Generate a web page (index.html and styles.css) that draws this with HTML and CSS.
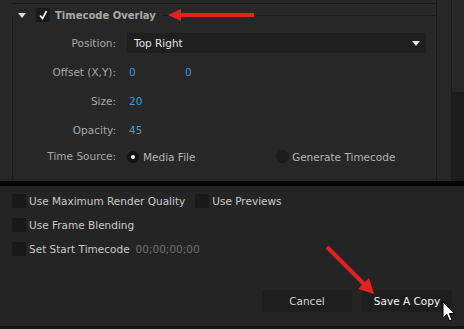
FILE: index.html
```html
<!DOCTYPE html>
<html lang="en">
<head>
    <meta charset="UTF-8">
    <title>Export Settings</title>
    <link rel="stylesheet" href="styles.css">
</head>
<body>
    <div class="effects">
        <div class="effects-main">
            <div class="prev-row"></div>

            <fieldset class="overlay">
                <legend class="overlay-head">
                    <span class="twisty"></span>
                    <span class="check">
                        <svg width="14" height="14" viewBox="0 0 14 14"><polyline points="4,7.5 6.5,10.5 10.5,3" fill="none" stroke="#f2f2f2" stroke-width="1.6"/></svg>
                    </span>
                    <span class="head-title">Timecode Overlay</span>
                </legend>

                <div class="props">
                    <div class="prop-label row-pos">Position:</div>
                    <div class="select">Top Right <span class="caret"></span></div>

                    <div class="prop-label">Offset (X,Y):</div>
                    <div class="values"><span class="num num-x">0</span><span class="num">0</span></div>

                    <div class="prop-label">Size:</div>
                    <div class="values"><span class="num">20</span></div>

                    <div class="prop-label">Opacity:</div>
                    <div class="values"><span class="num">45</span></div>

                    <div class="prop-label row-last">Time Source:</div>
                    <div class="values row-last">
                        <span class="radio-opt"><span class="radio on"></span>Media File</span>
                        <span class="radio-opt"><span class="radio big"></span>Generate Timecode</span>
                    </div>
                </div>
            </fieldset>
        </div>
        <div class="effects-gap"></div>
        <div class="scroll">
            <div class="scroll-thumb"></div>
        </div>
    </div>

    <div class="band"></div>

    <div class="footer">
        <div class="opt-row">
            <span class="box"></span><span class="opt-text">Use Maximum Render Quality</span>
            <span class="box box-2"></span><span class="opt-text">Use Previews</span>
        </div>
        <div class="opt-row">
            <span class="box"></span><span class="opt-text">Use Frame Blending</span>
        </div>
        <div class="opt-row">
            <span class="box"></span><span class="opt-text">Set Start Timecode</span>
            <span class="tc">00;00;00;00</span>
        </div>

        <div class="actions">
            <button class="btn">Cancel</button>
            <button class="btn btn-save">Save A Copy</button>
        </div>
    </div>

    <!-- annotations over the screenshot -->
    <svg class="arrow arrow-top" width="90" height="16" viewBox="0 0 90 16">
        <line x1="10" y1="8" x2="86" y2="8" stroke="#e3211f" stroke-width="4"/>
        <polygon points="0,8 13,2 13,14" fill="#e3211f"/>
    </svg>
    <svg class="arrow arrow-save" width="54" height="54" viewBox="0 0 54 54">
        <line x1="2" y1="2" x2="42" y2="42" stroke="#e3211f" stroke-width="4"/>
        <polygon points="49,49 33,44 44,33" fill="#e3211f"/>
    </svg>
    <svg class="cursor" width="14" height="22" viewBox="0 0 14 22">
        <path d="M1,1 L1,17 L4.8,13.4 L7.6,20 L10,19 L7.3,12.6 L12.4,12.6 Z" fill="#fff" stroke="#000" stroke-width="1"/>
    </svg>
</body>
</html>
```

FILE: styles.css
```css
body {
    margin: 0;
    width: 464px;
    height: 329px;
    overflow: hidden;
    position: relative;
    background: #242424;
    font-family: 'DejaVu Sans', sans-serif;
    font-size: 10.5px;
    color: #a8a8a8;
}

/* ---------- top effects panel ---------- */

.effects {
    display: flex;
    height: 181px;
    background: #272727;
}

.effects-main {
    width: 436px;
    border-right: 1px solid #1a1a1a;
}

.prev-row {
    height: 3px;
    margin-left: 12px;
    border-bottom: 1px solid #1a1a1a;
}

.effects-gap {
    width: 14px;
}

.scroll {
    width: 12px;
    border-left: 1px solid #1a1a1a;
    background: #1c1c1c;
}

.scroll-thumb {
    height: 92px;
    background: #272727;
}

.overlay {
    margin: 0 0 0 12px;
    padding: 0;
    border: none;
    border-top: 1px solid #1a1a1a;
    border-left: 1px solid #1a1a1a;
    min-inline-size: 0;
    height: 176px;
    box-sizing: border-box;
}

.overlay-head {
    display: flex;
    align-items: center;
    height: 22px;
    padding: 0 6px 0 5px;
}

.twisty {
    width: 0;
    height: 0;
    border-left: 4px solid transparent;
    border-right: 4px solid transparent;
    border-top: 5px solid #dcdcdc;
}

.check {
    width: 14px;
    height: 14px;
    margin-left: 10px;
    background: #1a1a1a;
}

.check svg {
    display: block;
}

.head-title {
    margin-left: 5px;
    font-size: 10px;
    font-weight: bold;
    color: #a9a9a9;
}

.props {
    display: grid;
    grid-template-columns: 103px 1fr;
    grid-auto-rows: 29px;
    column-gap: 11px;
    align-items: center;
    margin-top: 2px;
    padding-right: 10px;
}

.prop-label {
    text-align: right;
}

.row-pos {
    height: 30px;
    line-height: 30px;
}

.select {
    position: relative;
    height: 20px;
    line-height: 20px;
    padding-left: 7px;
    background: #1f1f1f;
    color: #e4e4e4;
}

.caret {
    position: absolute;
    right: 6px;
    top: 8px;
    border-left: 4px solid transparent;
    border-right: 4px solid transparent;
    border-top: 5px solid #e8e8e8;
}

.values {
    display: flex;
    align-items: center;
}

.num {
    padding-left: 2px;
    color: #3a9fe0;
}

.num-x {
    width: 54px;
}

.row-last {
    align-self: start;
    margin-top: 6px;
}

.radio-opt {
    display: flex;
    align-items: center;
    color: #b4b4b4;
}

.radio-opt:first-child {
    width: 149px;
}

.radio {
    width: 12px;
    height: 12px;
    margin-right: 4px;
    border-radius: 50%;
    background: #141414;
    display: flex;
    align-items: center;
    justify-content: center;
}

.radio.big {
    width: 13px;
    height: 13px;
    margin-right: 3px;
    background: #1b1b1b;
}

.radio.on::after {
    content: '';
    width: 4px;
    height: 4px;
    border-radius: 50%;
    background: #f0f0f0;
}

/* ---------- separator ---------- */

.band {
    height: 5px;
    background: #050505;
}

/* ---------- footer ---------- */

.footer {
    height: 137px;
    padding: 3px 12px 0 12px;
    border-bottom: 3px solid #131313;
    background: #242424;
    color: #cacaca;
}

.opt-row {
    display: flex;
    align-items: center;
    height: 24px;
}

.box {
    width: 14px;
    height: 14px;
    margin-right: 3px;
    background: #191919;
}

.box-2 {
    margin-left: 10px;
}

.tc {
    margin-left: 6px;
    color: #6f6f6f;
}

.actions {
    display: flex;
    justify-content: flex-end;
    gap: 10px;
    margin-top: 29px;
}

.btn {
    width: 90px;
    height: 22px;
    padding: 0;
    border: none;
    background: #1e1e1e;
    color: #d2d2d2;
    font-family: 'DejaVu Sans', sans-serif;
    font-size: 10.5px;
}

.btn-save {
    color: #f4f4f4;
}

/* ---------- overlays ---------- */

.arrow,
.cursor {
    position: absolute;
}

.arrow-top {
    left: 168px;
    top: 7px;
}

.arrow-save {
    left: 325px;
    top: 245px;
}

.cursor {
    left: 442px;
    top: 301px;
}
```
